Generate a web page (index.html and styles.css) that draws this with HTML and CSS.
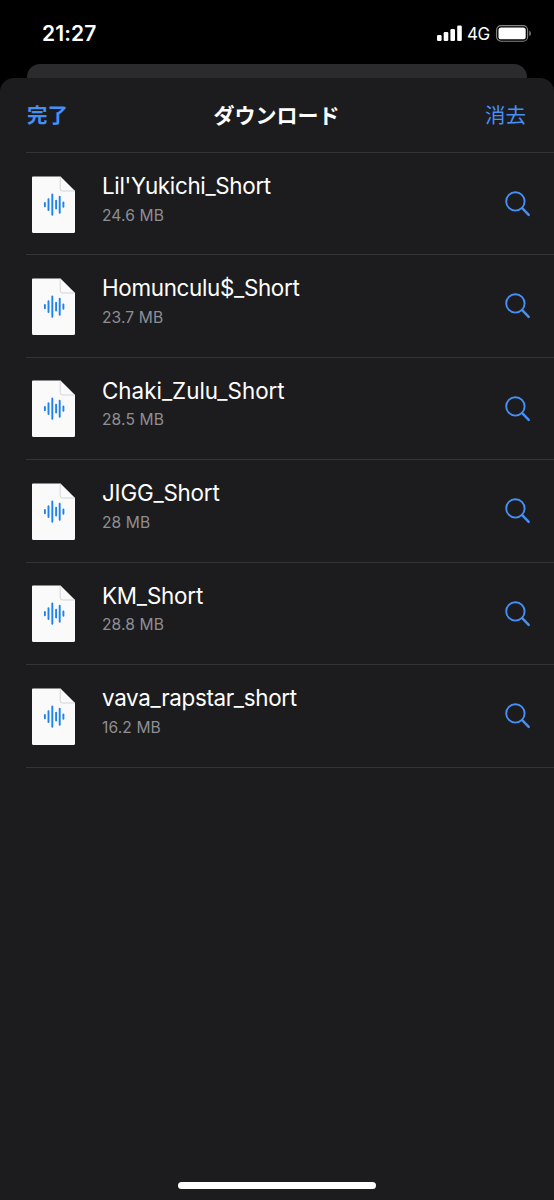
FILE: index.html
```html
<!DOCTYPE html>
<html lang="ja">
<head>
<meta charset="utf-8">
<title>ダウンロード</title>
<link rel="stylesheet" href="styles.css">
</head>
<body>
<svg width="0" height="0" class="defs" aria-hidden="true">
  <symbol id="file" viewBox="0 0 44 58">
    <path d="M2 .5H29.500L44 15V55.500a1.500 1.500 0 0 1-1.500 1.500H2.500a1.500 1.500 0 0 1-1.500-1.500V1.500a1 1 0 0 1 1-1Z" fill="#fafafb"/>
    <path d="M29.200.8V12.500Q29.200 15 31.700 15H43.700" fill="#fafafb" stroke="#d4d4d8" stroke-width="1"/>
    <path d="M13.900 27v3.200M17.500 23.200v10.800M21.300 18.400v20.400M25.100 24.600v8M28.700 20.700v16M32.400 26.500v4.200" fill="none" stroke="#1f82ec" stroke-width="1.900" stroke-linecap="round"/>
  </symbol>
  <symbol id="search" viewBox="0 0 26 26">
    <circle cx="10.400" cy="10.400" r="9.200" fill="none" stroke="#468ff5" stroke-width="1.900"/>
    <path d="M17.200 17.200L23.700 23.900" fill="none" stroke="#468ff5" stroke-width="2.500" stroke-linecap="round"/>
  </symbol>
</svg>
<header class="status">
  <span class="time">21:27</span>
  <svg class="signal" width="26" height="16" viewBox="0 0 26 16" fill="#fff"><rect x="0" y="10" width="4.600" height="6" rx="1.300"/><rect x="6.700" y="7" width="4.600" height="9" rx="1.300"/><rect x="13.400" y="4" width="4.600" height="12" rx="1.300"/><rect x="20.200" y="0.500" width="4.600" height="15.500" rx="1.300"/></svg>
  <span class="network">4G</span>
  <svg class="battery" width="36" height="18" viewBox="0 0 36 18"><rect x=".6" y=".6" width="31" height="15.600" rx="4.500" fill="none" stroke="#858585" stroke-width="1.100"/><rect x="2.500" y="2.500" width="27.200" height="11.800" rx="2.600" fill="#fff"/><path d="M33.300 5.700v5.400q1.600-.7 1.600-2.700t-1.600-2.700Z" fill="#858585"/></svg>
</header>
<div class="backdrop"></div>
<main class="sheet">
  <nav class="bar">
    <span class="done">完了</span>
    <h1 class="heading">ダウンロード</h1>
    <span class="clear">消去</span>
  </nav>
  <ul class="list">
    <li class="row"><svg class="file"><use href="#file"/></svg><div class="info"><div class="name">Lil'Yukichi_Short</div><div class="size">24.6 MB</div></div><svg class="search"><use href="#search"/></svg></li>
    <li class="row"><svg class="file"><use href="#file"/></svg><div class="info"><div class="name">Homunculu$_Short</div><div class="size">23.7 MB</div></div><svg class="search"><use href="#search"/></svg></li>
    <li class="row"><svg class="file"><use href="#file"/></svg><div class="info"><div class="name name-wide">Chaki_Zulu_Short</div><div class="size">28.5 MB</div></div><svg class="search"><use href="#search"/></svg></li>
    <li class="row"><svg class="file"><use href="#file"/></svg><div class="info"><div class="name name-mid">JIGG_Short</div><div class="size">28 MB</div></div><svg class="search"><use href="#search"/></svg></li>
    <li class="row"><svg class="file"><use href="#file"/></svg><div class="info"><div class="name name-mid">KM_Short</div><div class="size">28.8 MB</div></div><svg class="search"><use href="#search"/></svg></li>
    <li class="row"><svg class="file"><use href="#file"/></svg><div class="info"><div class="name">vava_rapstar_short</div><div class="size">16.2 MB</div></div><svg class="search"><use href="#search"/></svg></li>
  </ul>
  <div class="home"></div>
</main>
</body>
</html>
```
FILE: styles.css
```css
* { box-sizing: border-box; }
body {
  margin: 0;
  height: 1200px;
  display: flex;
  flex-direction: column;
  overflow: hidden;
  background: #000;
  color: #fff;
  font-family: Inter, "Noto Sans CJK JP", sans-serif;
}
.defs { position: absolute; }
.status {
  flex: none;
  height: 64px;
  display: flex;
  align-items: flex-start;
  padding: 25px 22px 0 42px;
}
.time {
  flex: 1;
  font-size: 21px;
  font-weight: 600;
  line-height: 17px;
  letter-spacing: 0.1px;
}
.signal { margin-right: 4px; }
.network {
  width: 29px;
  font-size: 17px;
  font-weight: 400;
  line-height: 18px;
  letter-spacing: -0.5px;
}
.backdrop {
  flex: none;
  height: 14px;
  margin: 0 27px;
  border-radius: 13px 13px 0 0;
  background: #2b2b2d;
}
.sheet {
  flex: 1;
  display: flex;
  flex-direction: column;
  border-radius: 14px 14px 0 0;
  background: #1c1c1e;
}
.bar {
  height: 74px;
  display: grid;
  grid-template-columns: 1fr auto 1fr;
  align-items: center;
  padding: 0 28px 3px 27px;
  font-size: 20.5px;
  color: #468ff5;
}
.done { font-weight: 700; }
.heading {
  margin: 0;
  font-size: 21px;
  font-weight: 700;
  color: #fff;
}
.clear { text-align: right; }
.list {
  margin: 0 0 0 26px;
  padding: 0;
  list-style: none;
  border-top: 1px solid #343436;
}
.row {
  height: 102.45px;
  display: flex;
  align-items: flex-start;
  padding: 22.5px 23px 0 5px;
  border-bottom: 1px solid #343436;
}
.file {
  width: 44px;
  height: 58px;
}
.info {
  flex: 1;
  padding-left: 27px;
  white-space: nowrap;
}
.name {
  margin-top: -3.5px;
  font-size: 22.4px;
  line-height: 28px;
  letter-spacing: -0.32px;
}
.name-mid { letter-spacing: -0.2px; }
.name-wide { letter-spacing: 0; }
.size {
  margin-top: 4.5px;
  font-size: 15.6px;
  line-height: 22px;
  letter-spacing: 0.1px;
  color: #8e8e93;
}
.search {
  width: 26px;
  height: 26px;
  margin-top: 15.5px;
}
.home {
  width: 198px;
  height: 7px;
  margin: auto auto 11px;
  border-radius: 4px;
  background: #fff;
}
```
